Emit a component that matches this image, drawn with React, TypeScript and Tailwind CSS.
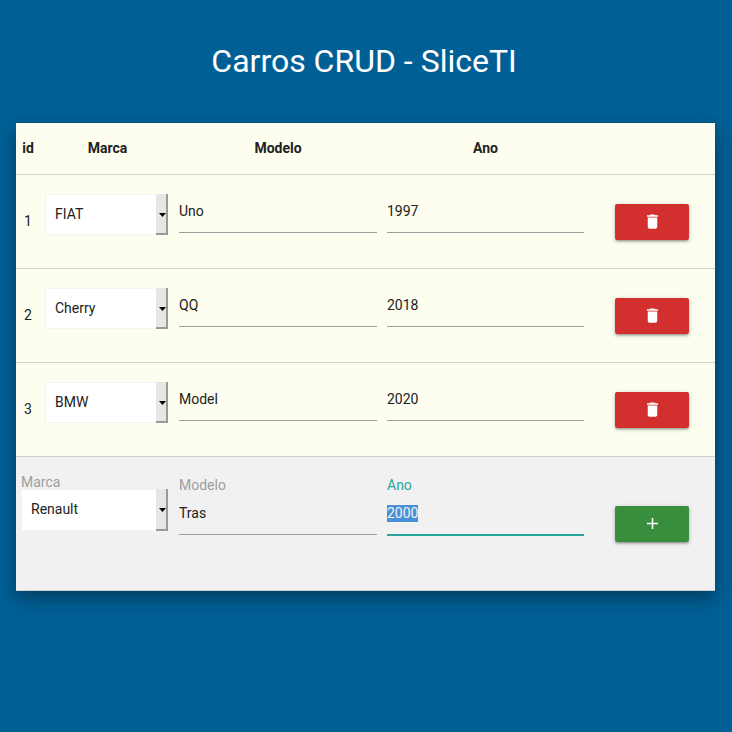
import React from 'react';

const cols = 'grid grid-cols-[25px_133px_208px_207px_126px] border-b border-[#cfcfcb]';

function Select({ value, className }: { value: string; className: string }) {
  return (
    <div className={`flex border ${className}`}>
      <span className="flex-1 bg-white pl-[9px]">{value}</span>
      <span className="-my-px -mr-px flex w-[12px] items-center justify-center border-r-2 border-b-2 border-[#999] bg-[#e6e6e6]">
        <svg width="7" height="4" viewBox="0 0 7 4" className="mt-0.5 ml-0.5 shrink-0">
          <path d="M0 0h7L3.5 4z" fill="#000" />
        </svg>
      </span>
    </div>
  );
}

function Field({ value }: { value: string }) {
  return <div className="mx-[5px] mt-[14px] h-[44px] border-b border-[#9e9e9e] leading-[45px]">{value}</div>;
}

function ActionButton({ kind }: { kind: 'delete' | 'add' }) {
  return (
    <button
      className={`flex h-9 w-[74px] items-center justify-center rounded-[2px] shadow-[0_2px_2px_0_rgba(0,0,0,0.14),0_3px_1px_-2px_rgba(0,0,0,0.12),0_1px_5px_0_rgba(0,0,0,0.2)] ${kind === 'delete' ? 'bg-[#d32f2f]' : 'bg-[#388e3c]'}`}
    >
      <svg width="19" height="19" viewBox="0 0 24 24" fill="#fff" className="ml-px">
        <path
          d={
            kind === 'delete'
              ? 'M6 19c0 1.1.9 2 2 2h8c1.1 0 2-.9 2-2V7H6v12zM19 4h-3.5l-1-1h-5l-1 1H5v2h14V4z'
              : 'M19 13h-6v6h-2v-6H5v-2h6V5h2v6h6v2z'
          }
        />
      </svg>
    </button>
  );
}

const cars = [
  { id: 1, brand: 'FIAT', model: 'Uno', year: '1997' },
  { id: 2, brand: 'Cherry', model: 'QQ', year: '2018' },
  { id: 3, brand: 'BMW', model: 'Model', year: '2020' },
];

export default function App() {
  return (
    <div className="h-[732px] w-[732px] overflow-hidden bg-[#006096] font-[Roboto,sans-serif] text-[14px] leading-[22px] text-[#212121]">
      <h1 className="flex h-[123px] items-center justify-center pr-[4px] pb-[2px] text-[32px] leading-9 font-normal text-white">
        Carros CRUD - SliceTI
      </h1>
      <main className="ml-4 w-[699px] bg-[#fdfeef] shadow-[0_8px_17px_0_rgba(0,0,0,0.2),0_6px_20px_0_rgba(0,0,0,0.19)]">
        <div className={`${cols} h-[52px] items-center pb-[2px] text-center font-bold`}>
          <span className="pr-px">id</span>
          <span>Marca</span>
          <span>Modelo</span>
          <span>Ano</span>
          <span />
        </div>
        {cars.map((car) => (
          <div key={car.id} className={`${cols} h-[94px]`}>
            <span className="self-center pr-px pb-[2px] text-center">{car.id}</span>
            <Select value={car.brand} className="mt-[19px] mr-[6px] ml-[4px] h-[41px] border-[#f4f4f2] leading-[39px]" />
            <Field value={car.model} />
            <Field value={car.year} />
            <div className="flex items-center justify-center">
              <ActionButton kind="delete" />
            </div>
          </div>
        ))}
        <div className={`${cols} h-[134px] bg-[#f1f1f1]`}>
          <div className="col-span-2 pt-[14px] pr-[6px] pl-[5px]">
            <div className="text-[#9e9e9e]">Marca</div>
            <Select value="Renault" className="-mt-[4px] h-[42px] border-[#f4f4f4] leading-[39px]" />
          </div>
          <div className="px-[5px] pt-[17px]">
            <div className="text-[#9e9e9e]">Modelo</div>
            <div className="-mt-[5px] h-[44px] border-b border-[#9e9e9e] leading-[45px]">Tras</div>
          </div>
          <div className="px-[5px] pt-[17px]">
            <div className="text-[#26a69a]">Ano</div>
            <div className="-mt-[5px] h-[45px] border-b-2 border-[#26a69a] leading-[45px]">
              <span className="bg-[#4a90d9] pb-px text-[#f1f1f1]">2000</span>
            </div>
          </div>
          <div className="flex items-center justify-center">
            <ActionButton kind="add" />
          </div>
        </div>
      </main>
    </div>
  );
}
